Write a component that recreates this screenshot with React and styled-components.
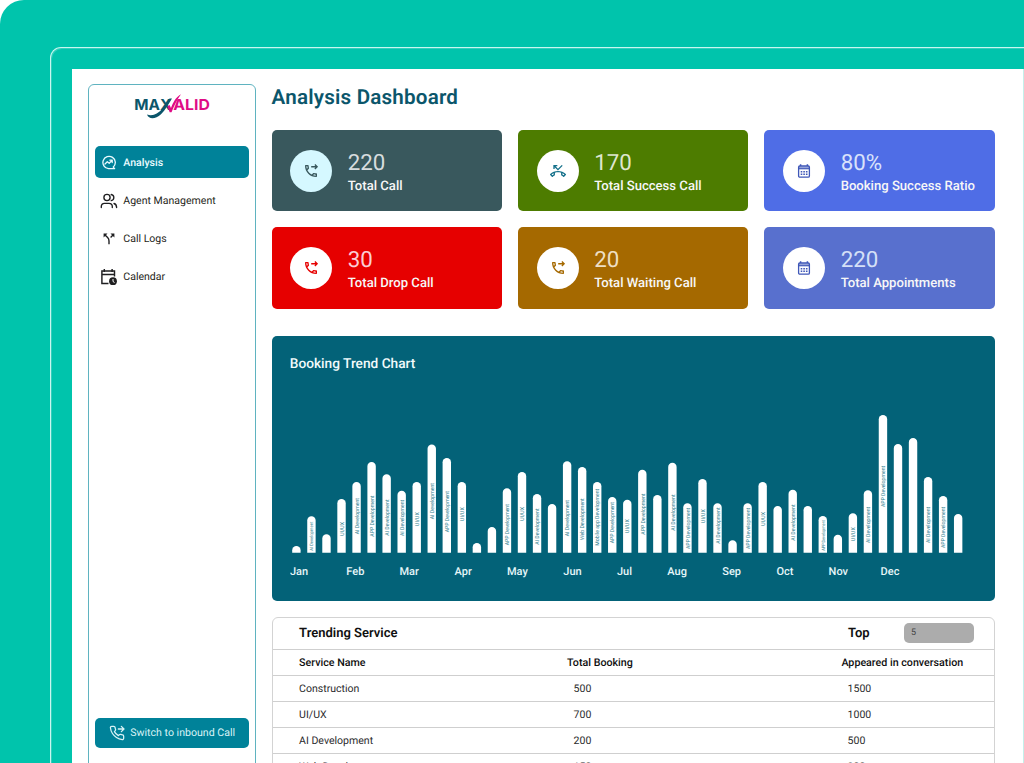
import React from "react";
import styled, { createGlobalStyle } from "styled-components";
import { MdOutlinePhoneMissed } from "react-icons/md";

const GlobalStyle = createGlobalStyle`
  * { box-sizing: border-box; }
  html, body { margin: 0; padding: 0; background: #fff; overflow: hidden; }
  body {
    font-family: Roboto, "Liberation Sans", sans-serif;
    color: #1c1c1e;
    text-rendering: geometricPrecision;
  }
  svg { display: block; flex: none; }
`;

const Backdrop = styled.div`
  width: 1024px;
  height: 763px;
  overflow: hidden;
  padding: 46.6px 0 0 50.4px;
  background: #00c4ac;
  border-top-left-radius: 24px;
`;

const Bezel = styled.div`
  height: 740px;
  border: solid #c9f6ef;
  border-width: 1px 0 0 1px;
  box-shadow: inset 1px 1px 0 rgba(255, 255, 255, 0.2);
  border-top-left-radius: 11px;
  padding: 21px 0 0 21px;
`;

const Screen = styled.div`
  height: 720px;
  background: #fff;
  border-right: 1px solid #c4f0ea;
  padding: 15.5px 28.1px 0 15.5px;
  display: flex;
  gap: 15.7px;
`;

const Sidebar = styled.aside`
  width: 168px;
  height: 740px;
  flex: none;
  border: 1px solid #5fb3c0;
  border-radius: 6px;
  padding: 0 6px;
  display: flex;
  flex-direction: column;
`;

const LogoBox = styled.div`
  height: 61.2px;
  padding: 7px 0 0 38px;
`;

const Nav = styled.nav`
  display: flex;
  flex-direction: column;
  gap: 6.7px;
`;

const NavItem = styled.a`
  height: 31.3px;
  border-radius: 5px;
  padding: 1.4px 0 0 5px;
  display: flex;
  align-items: center;
  font-size: 10.55px;
  line-height: 14px;
  font-weight: ${(p) => (p.$active ? 500 : 400)};
  color: ${(p) => (p.$active ? "#e9fbff" : "#1f1f21")};
  background: ${(p) => (p.$active ? "#008299" : "transparent")};
`;

const NavIcon = styled.span`
  width: 18px;
  margin-right: 5.4px;
  display: flex;
  justify-content: center;
`;

const SwitchButton = styled.button`
  margin-top: 426px;
  height: 30px;
  flex: none;
  border: 0;
  border-radius: 5px;
  background: #008299;
  color: #d9f3f6;
  font: 400 10.6px/14px Roboto, sans-serif;
  text-rendering: inherit;
  padding: 0 0 0 14.4px;
  display: flex;
  align-items: center;
  gap: 5px;
`;

const Main = styled.main`
  flex: 1;
  min-width: 0;
  display: flex;
  flex-direction: column;
`;

const Title = styled.h1`
  margin: 0;
  height: 46.2px;
  padding-top: 1px;
  font-size: 20.6px;
  line-height: 26px;
  font-weight: 600;
  letter-spacing: 0.2px;
  color: #0b566b;
`;

const Cards = styled.section`
  display: grid;
  grid-template-columns: repeat(3, 1fr);
  grid-auto-rows: 81.2px;
  gap: 16px;
`;

const Card = styled.article`
  border-radius: 5px;
  background: ${(p) => p.$bg};
  padding-left: 18.5px;
  display: flex;
  align-items: center;
  gap: 15.7px;
`;

const Disc = styled.div`
  width: 42px;
  height: 42px;
  border-radius: 50%;
  background: ${(p) => p.$bg || "#fff"};
  color: ${(p) => p.$color};
  display: flex;
  align-items: center;
  justify-content: center;
`;

const Figures = styled.div`
  padding-top: 5.4px;
`;

const Value = styled.div`
  font-size: 22.3px;
  line-height: 26px;
  color: ${(p) => p.$color};
`;

const Label = styled.div`
  font-size: 13.1px;
  line-height: 21px;
  font-weight: 500;
  color: #f7f7f7;
`;

const ChartPanel = styled.section`
  margin-top: 27.8px;
  height: 265px;
  flex: none;
  border-radius: 5px;
  background: #036278;
  padding: 18.8px 0 0 18.2px;
`;

const ChartTitle = styled.h2`
  margin: 0;
  font-size: 13.7px;
  line-height: 19px;
  font-weight: 500;
  color: #f2fbfc;
`;

const Table = styled.section`
  margin-top: 15.8px;
  flex: none;
  border: 1px solid #d3d3d3;
  border-radius: 6px 6px 0 0;
`;

const TableTop = styled.div`
  height: 30.3px;
  display: flex;
  align-items: center;
  padding: 0 20px 0 26.5px;
  font-size: 13px;
  font-weight: 600;
  color: #101010;
`;

const TopLabel = styled.span`
  margin-left: auto;
  width: 56px;
`;

const TopInput = styled.span`
  width: 70px;
  height: 20px;
  border-radius: 5px;
  background: #acacac;
  padding-left: 7px;
  font-size: 9px;
  line-height: 20px;
  font-weight: 400;
  color: #444;
`;

const Row = styled.div`
  height: 26.2px;
  border-top: 1px solid #cfcfcf;
  padding-left: 26.5px;
  display: grid;
  grid-template-columns: ${(p) => (p.$head ? "268px 274.3px 1fr" : "274.5px 274px 1fr")};
  align-items: center;
  font-size: ${(p) => (p.$head ? 10.7 : 10.55)}px;
  font-weight: ${(p) => (p.$head ? 500 : 400)};
  color: ${(p) => (p.$head ? "#101010" : "#2b2b2d")};
`;

const Logo = () => (
  <svg width="78" height="28" viewBox="0 0 78 28">
    <g fontFamily="Inter, sans-serif" fontSize="15" fontWeight="700">
      <text x="1.3" y="17.600" fill="#0b566b" textLength="37" lengthAdjust="spacingAndGlyphs">MAX</text>
      <text x="40.300" y="17.600" fill="#df0c86" textLength="36.5" lengthAdjust="spacingAndGlyphs">ALID</text>
    </g>
    <path d="M36.500 6.500C31 15 25 25.800 14 22.600C16 27.800 22.500 27.300 28 22.300C32.500 18 35.500 12 39 6.500Z" fill="#0b566b" />
    <path d="M34.300 14.200L36.600 13L38 16C40 10.500 42.500 5.500 48 2.200C43.500 8.200 41 14 38.500 20.300L36.700 20.300Z" fill="#df0c86" />
  </svg>
);

const AnalysisIcon = () => (
  <svg width="15" height="15" viewBox="0 0 15 15" fill="none" stroke="currentColor" strokeWidth="1.3" strokeLinecap="round" strokeLinejoin="round">
    <path d="M12.300 12.100A6.200 6.200 0 1 0 7.500 13.700H13.600L12.300 12.100" />
    <path d="M4 9L6.300 6.800L8.200 8.300L11 5.400M8.900 5.200H11.200V7.500" />
  </svg>
);

const PeopleIcon = () => (
  <svg width="18" height="16" viewBox="0 0 18 16" fill="none" stroke="currentColor" strokeWidth="1.350" strokeLinecap="round">
    <circle cx="7" cy="4.500" r="3.100" />
    <path d="M1.300 14.600V13.500C1.300 11.400 2.700 10.300 4.500 10.300H9C11 10.300 12.300 11.500 12.300 13.500V14.600" />
    <path d="M11.200 1.500C14.700 2 14.700 7 11.200 7.600M14 10.500C15.800 11 16.600 12.200 16.600 14.600" />
  </svg>
);

const SplitIcon = () => (
  <svg width="12" height="12" viewBox="0 0 12 12" fill="none" stroke="currentColor" strokeWidth="1.4">
    <path d="M1.500 1.500L4.600 4.600Q6 6 6 8V11.300" />
    <path d="M10.500 1.500L7.600 4.400" />
    <path d="M.6.600H4.500L.6 4.500ZM11.400.600V4.500L7.500.600Z" fill="currentColor" stroke="none" />
  </svg>
);

const CalendarClockIcon = () => (
  <svg width="18" height="18" viewBox="0 0 18 18" fill="none" stroke="currentColor" strokeWidth="1.450">
    <path d="M8.500 15.500H1.900V3H14.500V8.500M1.900 6.500H14.500M4.300 1V4M12.100 1V4" />
    <circle cx="13" cy="13.200" r="3.900" fill="currentColor" stroke="none" />
    <path d="M13 11V13.500L14.500 14.500" stroke="#fff" strokeWidth="1" />
  </svg>
);

const CalendarIcon = () => (
  <svg width="14" height="16" viewBox="0 0 14 16" fill="none" stroke="currentColor">
    <rect x="1.600" y="3" width="10.800" height="11.200" rx="1.200" strokeWidth="1.300" />
    <path d="M3.600 1.300V3M10.400 1.300V3" strokeWidth="1.500" />
    <path d="M1.600 5.700H12.400" strokeWidth="1.200" />
    <path d="M1.600 4.300H12.400" strokeWidth="1.600" opacity=".55" />
    <path d="M3.700 8.700H10.700M3.700 11.300H10.700" strokeWidth="1.500" strokeDasharray="1.600 1" />
  </svg>
);

const ForwardIcon = () => (
  <svg width="16" height="16" viewBox="0 0 24 24" fill="currentColor">
    <path d="M6.540 5c.060.890.210 1.760.450 2.590l-1.200 1.200c-.410-1.200-.670-2.470-.760-3.790h1.510m9.860 12.020c.850.240 1.720.390 2.600.450v1.490c-1.320-.090-2.590-.350-3.800-.750l1.200-1.190M7.500 3H4c-.550 0-1 .450-1 1 0 9.390 7.610 17 17 17 .550 0 1-.450 1-1v-3.490c0-.550-.450-1-1-1-1.240 0-2.450-.200-3.570-.570-.100-.040-.210-.050-.310-.050-.260 0-.510.100-.710.290l-2.200 2.200c-2.830-1.450-5.150-3.760-6.590-6.590l2.200-2.200c.280-.280.360-.670.250-1.020C8.700 6.450 8.500 5.250 8.500 4c0-.550-.450-1-1-1z" />
    <path d="M12.300 5.600H21M17.800 2.200L21.200 5.600L17.800 9" fill="none" stroke="currentColor" strokeWidth="2" />
  </svg>
);

const SwitchIcon = () => (
  <svg width="16" height="16" viewBox="0 0 24 24" fill="none" stroke="currentColor" strokeWidth="1.900" strokeLinecap="round" strokeLinejoin="round">
    <path d="M14 6H22M18.500 2L22.500 6L18.500 10" />
    <path d="M22 16.900v3a2 2 0 0 1-2.200 2 19.800 19.800 0 0 1-8.600-3.100 19.500 19.500 0 0 1-6-6A19.800 19.800 0 0 1 2.100 4.200 2 2 0 0 1 4.100 2h3a2 2 0 0 1 2 1.700c.130 1 .360 1.900.700 2.800a2 2 0 0 1-.450 2.100L8.100 9.900a16 16 0 0 0 6 6l1.300-1.300a2 2 0 0 1 2.100-.450c.900.340 1.800.570 2.800.700a2 2 0 0 1 1.700 2z" />
  </svg>
);

const AI = "AI Development";
const APP = "APP Development";
const UX = "UI/UX";

/* top of the bar, label, baseline start of the label, label length */
const bars = [
  [546], [516.3, AI, 550.7, 29], [534.3], [499, UX, 535.7], [482, AI, 534.3],
  [462, APP, 536.7], [474.3, AI, 535.7], [490.7, AI, 536], [482, UX, 526],
  [444.5, AI, 519.3], [458, APP, 532.3], [482, UX, 521], [543], [527],
  [488.3, APP, 545.3], [472, UX, 520.7], [494, AI, 544.7], [504],
  [461.3, AI, 536.3], [467, "Web Development", 540, 41.7],
  [482, "Mobile app Development", 545.7, 57], [497, APP, 543.3],
  [499.7, UX, 533], [469.7, APP, 534.7], [495], [462.7, AI, 530.7],
  [503.3, APP, 549], [479, UX, 523], [503.3, AI, 543.7], [540.3],
  [503.3, APP, 549], [482, UX, 525.7], [506], [489.7, AI, 540.7], [506],
  [516, APP, 550.7, 30.7], [534.7], [513.3, UX, 541], [490.3, AI, 543],
  [415, APP, 507], [444], [438], [477, AI, 543], [496, APP, 548], [514],
];

const lengths = { [AI]: 36.3, [APP]: 41.2, [UX]: 13.7 };

const months = [
  ["Jan", 290], ["Feb", 346.3], ["Mar", 399.5], ["Apr", 454.5], ["May", 507],
  ["Jun", 563.3], ["Jul", 617], ["Aug", 667.3], ["Sep", 722.3], ["Oct", 776.5],
  ["Nov", 828.6], ["Dec", 880.6],
];

const TrendChart = () => (
  <svg width="700" height="215" viewBox="290 374 700 215" fontFamily="Roboto, sans-serif">
    {bars.map(([top, label, start, length], i) => {
      const cx = 296.4 + i * 15.04;
      const size = length && length < 31 ? 4.6 : 5.5;
      return (
        <g key={i}>
          <path d={`M${cx - 4.2} 552.800V${top + 4.2}a4.200 4.200 0 0 1 8.400 0V552.800Z`} fill="#fff" />
          {label && (
            <text
              transform={`translate(${cx + size * 0.36 + 0.2} ${start}) rotate(-90)`}
              fontSize={size}
              fill="#2f7f90"
              textLength={length || lengths[label]}
              lengthAdjust="spacingAndGlyphs"
            >
              {label}
            </text>
          )}
        </g>
      );
    })}
    {months.map(([name, x]) => (
      <text key={name} x={x} y="575" fontSize="11" fontWeight="500" fill="#e6f6f8">{name}</text>
    ))}
  </svg>
);

const cards = [
  { bg: "#39585d", disc: "#d5f8ff", color: "#39585d", tint: "#d7dcde", value: "220", label: "Total Call", Icon: ForwardIcon },
  { bg: "#4d7c00", color: "#14708a", tint: "#dfe6cf", value: "170", label: "Total Success Call", Icon: MdOutlinePhoneMissed },
  { bg: "#4f6de6", color: "#3f57b8", tint: "#d9e2fb", value: "80%", label: "Booking Success Ratio", Icon: CalendarIcon },
  { bg: "#e60000", color: "#e60000", tint: "#fbcdd4", value: "30", label: "Total Drop Call", Icon: ForwardIcon },
  { bg: "#a56900", color: "#a56900", tint: "#eedfc4", value: "20", label: "Total Waiting Call", Icon: ForwardIcon },
  { bg: "#5870ce", color: "#3f57b8", tint: "#d5e0f7", value: "220", label: "Total Appointments", Icon: CalendarIcon },
];

const services = [
  ["Construction", "500", "1500"],
  ["UI/UX", "700", "1000"],
  ["AI Development", "200", "500"],
  ["Web Development", "150", "300"],
];

export default function App() {
  return (
    <>
      <GlobalStyle />
      <Backdrop>
        <Bezel>
          <Screen>
            <Sidebar>
              <LogoBox><Logo /></LogoBox>
              <Nav>
                <NavItem $active><NavIcon><AnalysisIcon /></NavIcon>Analysis</NavItem>
                <NavItem><NavIcon><PeopleIcon /></NavIcon>Agent Management</NavItem>
                <NavItem><NavIcon><SplitIcon /></NavIcon>Call Logs</NavItem>
                <NavItem><NavIcon><CalendarClockIcon /></NavIcon>Calendar</NavItem>
              </Nav>
              <SwitchButton><SwitchIcon />Switch to inbound Call</SwitchButton>
            </Sidebar>
            <Main>
              <Title>Analysis Dashboard</Title>
              <Cards>
                {cards.map(({ bg, disc, color, tint, value, label, Icon }) => (
                  <Card key={label} $bg={bg}>
                    <Disc $bg={disc} $color={color}><Icon size={16} /></Disc>
                    <Figures>
                      <Value $color={tint}>{value}</Value>
                      <Label>{label}</Label>
                    </Figures>
                  </Card>
                ))}
              </Cards>
              <ChartPanel>
                <ChartTitle>Booking Trend Chart</ChartTitle>
                <TrendChart />
              </ChartPanel>
              <Table>
                <TableTop>
                  Trending Service
                  <TopLabel>Top</TopLabel>
                  <TopInput>5</TopInput>
                </TableTop>
                <Row $head><span>Service Name</span><span>Total Booking</span><span>Appeared in conversation</span></Row>
                {services.map(([name, total, seen]) => (
                  <Row key={name}><span>{name}</span><span>{total}</span><span>{seen}</span></Row>
                ))}
              </Table>
            </Main>
          </Screen>
        </Bezel>
      </Backdrop>
    </>
  );
}
